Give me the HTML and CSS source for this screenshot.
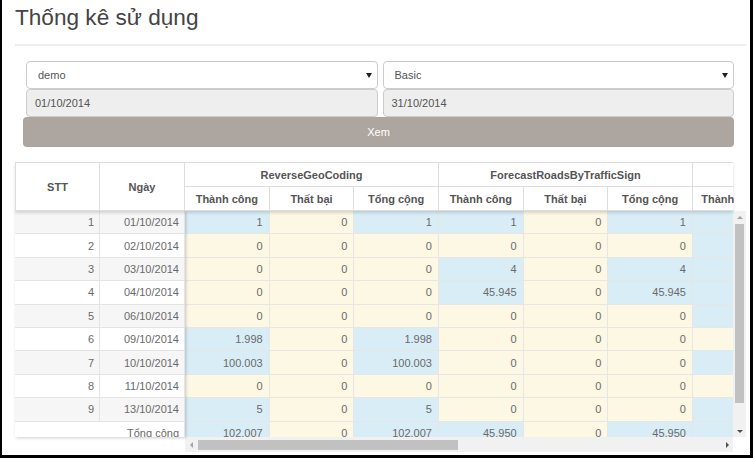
FILE: index.html
```html
<!DOCTYPE html>
<html lang="vi">
<head>
<meta charset="utf-8">
<title>Thống kê sử dụng</title>
<link rel="stylesheet" href="styles.css">
</head>
<body>
<div class="frame">
  <h1 class="title">Thống kê sử dụng</h1>
  <hr class="rule">
  <form class="filters">
    <div class="fields">
      <div class="select"><span>demo</span><span class="caret"></span></div>
      <div class="select"><span>Basic</span><span class="caret"></span></div>
      <div class="date">01/10/2014</div>
      <div class="date">31/10/2014</div>
    </div>
    <button type="button" class="btn">Xem</button>
  </form>

  <div class="dt">
    <div class="dt-head">
      <div class="head-fixed">
        <div class="hcell">STT</div>
        <div class="hcell">Ngày</div>
      </div>
      <div class="head-scroll">
        <div class="head-groups">
          <div class="hcell">ReverseGeoCoding</div>
          <div class="hcell">ForecastRoadsByTrafficSign</div>
          <div class="hcell">ForecastRoads</div>
        </div>
        <div class="head-subs">
          <div class="hcell">Thành công</div>
          <div class="hcell">Thất bại</div>
          <div class="hcell">Tổng cộng</div>
          <div class="hcell">Thành công</div>
          <div class="hcell">Thất bại</div>
          <div class="hcell">Tổng cộng</div>
          <div class="hcell">Thành công</div>
        </div>
      </div>
    </div>

    <div class="dt-body">
      <div class="body-fixed">
        <div class="frow odd"><div class="cell">1</div><div class="cell">01/10/2014</div></div>
        <div class="frow"><div class="cell">2</div><div class="cell">02/10/2014</div></div>
        <div class="frow odd"><div class="cell">3</div><div class="cell">03/10/2014</div></div>
        <div class="frow"><div class="cell">4</div><div class="cell">04/10/2014</div></div>
        <div class="frow odd"><div class="cell">5</div><div class="cell">06/10/2014</div></div>
        <div class="frow"><div class="cell">6</div><div class="cell">09/10/2014</div></div>
        <div class="frow odd"><div class="cell">7</div><div class="cell">10/10/2014</div></div>
        <div class="frow"><div class="cell">8</div><div class="cell">11/10/2014</div></div>
        <div class="frow odd"><div class="cell">9</div><div class="cell">13/10/2014</div></div>
        <div class="frow total"><div class="cell">Tổng cộng</div></div>
      </div>

      <div class="body-main">
        <div class="body-top">
          <div class="body-scroll">
            <div class="drow"><div class="cell info">1</div><div class="cell warn">0</div><div class="cell info">1</div><div class="cell info">1</div><div class="cell warn">0</div><div class="cell info">1</div><div class="cell info">12</div></div>
            <div class="drow"><div class="cell warn">0</div><div class="cell warn">0</div><div class="cell warn">0</div><div class="cell warn">0</div><div class="cell warn">0</div><div class="cell warn">0</div><div class="cell info">3</div></div>
            <div class="drow"><div class="cell warn">0</div><div class="cell warn">0</div><div class="cell warn">0</div><div class="cell info">4</div><div class="cell warn">0</div><div class="cell info">4</div><div class="cell info">7</div></div>
            <div class="drow"><div class="cell warn">0</div><div class="cell warn">0</div><div class="cell warn">0</div><div class="cell info">45.945</div><div class="cell warn">0</div><div class="cell info">45.945</div><div class="cell info">2</div></div>
            <div class="drow"><div class="cell warn">0</div><div class="cell warn">0</div><div class="cell warn">0</div><div class="cell warn">0</div><div class="cell warn">0</div><div class="cell warn">0</div><div class="cell info">5</div></div>
            <div class="drow"><div class="cell info">1.998</div><div class="cell warn">0</div><div class="cell info">1.998</div><div class="cell warn">0</div><div class="cell warn">0</div><div class="cell warn">0</div><div class="cell warn">0</div></div>
            <div class="drow"><div class="cell info">100.003</div><div class="cell warn">0</div><div class="cell info">100.003</div><div class="cell warn">0</div><div class="cell warn">0</div><div class="cell warn">0</div><div class="cell info">1</div></div>
            <div class="drow"><div class="cell warn">0</div><div class="cell warn">0</div><div class="cell warn">0</div><div class="cell warn">0</div><div class="cell warn">0</div><div class="cell warn">0</div><div class="cell warn">0</div></div>
            <div class="drow"><div class="cell info">5</div><div class="cell warn">0</div><div class="cell info">5</div><div class="cell warn">0</div><div class="cell warn">0</div><div class="cell warn">0</div><div class="cell info">4</div></div>
            <div class="drow"><div class="cell info">102.007</div><div class="cell warn">0</div><div class="cell info">102.007</div><div class="cell info">45.950</div><div class="cell warn">0</div><div class="cell info">45.950</div><div class="cell info">34</div></div>
          </div>
          <div class="vscroll">
            <div class="sb-btn"><span class="tri tri-up"></span></div>
            <div class="vthumb"></div>
            <div class="sb-space"></div>
            <div class="sb-btn"><span class="tri tri-down"></span></div>
          </div>
        </div>
        <div class="hscroll-row">
          <div class="hscroll">
            <div class="sb-btn"><span class="tri tri-left"></span></div>
            <div class="hthumb"></div>
            <div class="sb-space"></div>
            <div class="sb-btn"><span class="tri tri-right"></span></div>
          </div>
          <div class="corner"></div>
        </div>
      </div>
    </div>
  </div>
</div>
</body>
</html>
```

FILE: styles.css
```css
* { box-sizing: border-box; }
html, body { margin: 0; padding: 0; background: #fff; }
body {
  font-family: "Liberation Sans", Arial, sans-serif;
  font-size: 11px;
  color: #666;
}
.frame {
  width: 753px;
  height: 458px;
  border-left: 2px solid #000;
  border-right: 3px solid #000;
  border-bottom: 3px solid #000;
  padding: 0 4px 0 13px;
  overflow: hidden;
}
.title {
  margin: 3px 0 0;
  font-size: 22.6px;
  line-height: 30px;
  font-weight: normal;
  color: #444;
}
.rule {
  margin: 11px 0 0;
  border: 0;
  height: 2px;
  background: #eee;
}
.filters { margin: 15px 12px 0 8px; }
.fields {
  display: grid;
  grid-template-columns: 1fr 1fr;
  column-gap: 5px;
  margin-left: 3px;
}
.select {
  height: 28px;
  border: 1px solid #ccc;
  border-radius: 4px;
  background: #fff;
  display: flex;
  align-items: center;
  justify-content: space-between;
  padding: 0 5px 0 11px;
  color: #555;
}
.caret {
  width: 0;
  height: 0;
  border-left: 3px solid transparent;
  border-right: 3px solid transparent;
  border-top: 5px solid #222;
}
.date {
  height: 28px;
  border: 1px solid #ccc;
  border-radius: 4px;
  background: #eee;
  display: flex;
  align-items: center;
  padding: 0 8px;
  color: #555;
}
.btn {
  display: block;
  width: 100%;
  height: 30px;
  border: 0;
  border-radius: 4px;
  background: #ada59f;
  color: #fff;
  font: inherit;
  padding: 0;
}

/* table */
.dt { margin-top: 15px; }
.dt-head {
  display: flex;
  width: 718px;
  position: relative;
  z-index: 3;
  background: #fff;
  border-top: 1px solid #ddd;
  border-left: 1px solid #ddd;
  box-shadow: 0 2px 3px rgba(0,0,0,0.14);
}
.hcell {
  display: flex;
  align-items: center;
  justify-content: center;
  border-right: 1px solid #ddd;
  border-bottom: 1px solid #ddd;
  font-weight: bold;
  color: #555;
  white-space: nowrap;
  overflow: hidden;
}
.head-fixed {
  display: grid;
  grid-template-columns: 84px 85px;
  height: 48px;
  width: 169px;
  flex: none;
}
.head-scroll {
  width: 549px;
  overflow: hidden;
  flex: none;
}
.head-groups {
  display: grid;
  grid-template-columns: 254px 254px 254px;
  width: 800px;
  height: 24px;
}
.head-subs {
  display: grid;
  grid-template-columns: 84.67px 84.67px 84.66px 84.67px 84.67px 84.66px 80px;
  width: 800px;
  height: 24px;
}

.dt-body {
  display: flex;
  height: 241px;
}
.body-fixed {
  width: 170px;
  height: 226px;
  flex: none;
  overflow: hidden;
  position: relative;
  z-index: 2;
  background: #fff;
  box-shadow: 1px 1px 3px rgba(0,0,0,0.2);
}
.frow {
  display: grid;
  grid-template-columns: 85px 85px;
  height: 23.4px;
  background: #fff;
}
.frow.odd { background: #f6f6f6; }
.frow.total { grid-template-columns: 170px; }
.cell {
  display: flex;
  align-items: center;
  justify-content: flex-end;
  border-right: 1px solid #e4e4e4;
  border-bottom: 1px solid #e4e4e4;
  padding-right: 5px;
  white-space: nowrap;
  overflow: hidden;
  color: #6a6a6a;
}
.body-main {
  width: 561px;
  flex: none;
  display: flex;
  flex-direction: column;
}
.body-top {
  display: flex;
  height: 226px;
}
.body-scroll {
  width: 548px;
  overflow: hidden;
  flex: none;
}
.drow {
  display: grid;
  grid-template-columns: 84.67px 84.67px 84.66px 84.67px 84.67px 84.66px 80px;
  width: 800px;
  height: 23.4px;
}
.drow .cell { padding-right: 6px; border-color: #e6e6e6; }
.info { background: #d9edf7; }
.warn { background: #fcf8e3; }

.vscroll {
  width: 13px;
  flex: none;
  background: #f1f1f1;
  display: flex;
  flex-direction: column;
}
.sb-btn {
  flex: none;
  width: 13px;
  height: 12px;
  display: flex;
  align-items: center;
  justify-content: center;
}
.sb-space { flex: 1; }
.vthumb {
  flex: none;
  height: 179px;
  margin: 1px 2px 0 2px;
  background: #c1c1c1;
}
.hscroll-row { display: flex; height: 15px; }
.hscroll {
  width: 548px;
  flex: none;
  background: #f1f1f1;
  display: flex;
  align-items: center;
}
.hscroll .sb-btn { width: 12px; height: 15px; }
.hthumb {
  flex: none;
  width: 260px;
  height: 10px;
  margin-left: 1px;
  background: #c1c1c1;
}
.corner { width: 13px; background: #fff; }

.tri { width: 0; height: 0; }
.tri-up {
  border-left: 3px solid transparent;
  border-right: 3px solid transparent;
  border-bottom: 3px solid #a3a3a3;
}
.tri-down {
  border-left: 3px solid transparent;
  border-right: 3px solid transparent;
  border-top: 3px solid #505050;
}
.tri-left {
  border-top: 3px solid transparent;
  border-bottom: 3px solid transparent;
  border-right: 3px solid #a3a3a3;
}
.tri-right {
  border-top: 3px solid transparent;
  border-bottom: 3px solid transparent;
  border-left: 3px solid #505050;
}
```
